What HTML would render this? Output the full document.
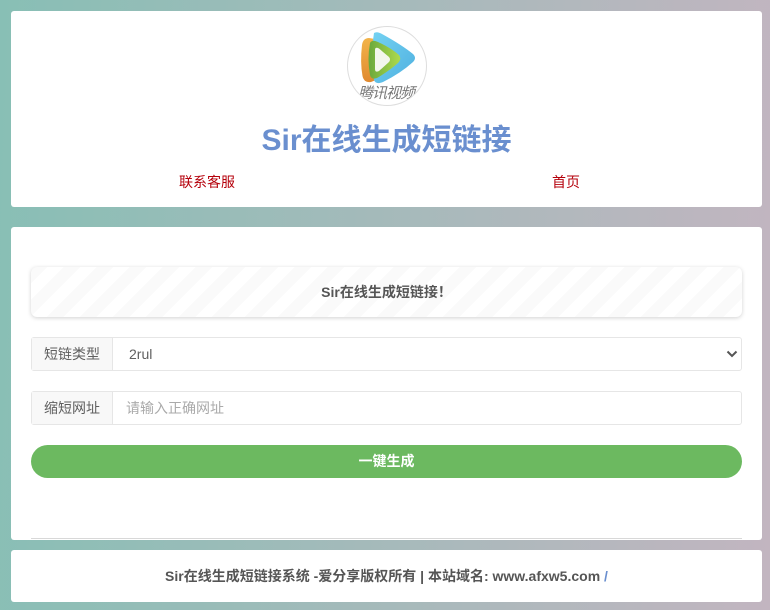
<!DOCTYPE html>
<html lang="zh-CN">
<head>
<meta charset="utf-8">
<title>Sir在线生成短链接</title>
<style>
*{box-sizing:border-box;margin:0;padding:0}
html,body{width:770px;height:610px;overflow:hidden}
body{position:relative;background:linear-gradient(92deg,#88bfb5 0%,#c2b5c0 100%);font-family:"Liberation Sans","Noto Sans CJK SC",sans-serif;font-size:14px;color:#555}
.card{position:absolute;left:11px;width:751px;background:#fff;border-radius:3px}
.a{position:absolute}
.logo{left:336px;top:15px;width:80px;height:80px}
.title{left:0;top:110px;width:751px;text-align:center;font-size:30px;font-weight:bold;line-height:40px;color:#6a8fcf}
.nav{top:161px;font-size:14px;line-height:20px;color:#b5000b}
.notice{left:20px;top:40px;width:711px;height:50px;border-radius:6px;text-align:center;font-size:14px;font-weight:bold;line-height:50px;color:#555;box-shadow:0 1px 4px rgba(0,0,0,.18);background-color:#fff;background-image:linear-gradient(135deg,#fafafa 25%,transparent 25%,transparent 50%,#fafafa 50%,#fafafa 75%,transparent 75%,transparent);background-size:33px 33px}
.group{left:20px;width:711px;height:34px;border:1px solid #e6e6e6;border-radius:3px;background:#fff;font-size:14px}
.addon{position:absolute;left:0;top:0;width:81px;height:32px;background:#f8f8f8;border-right:1px solid #e6e6e6;text-align:center;line-height:32px;color:#5f5f5f}
.val{position:absolute;left:97px;top:0;line-height:32px;color:#5f5f5f}
.ph{position:absolute;left:94px;top:0;line-height:32px;color:#aaa}
.chev{position:absolute;right:3px;top:11px;width:12px;height:10px}
.btn{left:20px;top:218px;width:711px;height:33px;border-radius:17px;background:#6cb960;color:#fff;text-align:center;font-size:14px;font-weight:bold;line-height:33px}
.hr{left:20px;top:311px;width:711px;height:1px;background:#d8d8d8}
.foot{text-align:center;font-size:14px;font-weight:bold;line-height:52px;color:#555}
.foot span{color:#6a8fcf}
</style>
</head>
<body>
<div class="card" style="top:11px;height:196px">
  <svg class="a logo" viewBox="0 0 80 80">
    <defs>
      <linearGradient id="g1" x1="0" y1="0" x2="1" y2="1"><stop offset="0" stop-color="#74d2f2"/><stop offset="1" stop-color="#4fb0e0"/></linearGradient>
      <linearGradient id="g2" x1="0" y1="0" x2="1" y2="0"><stop offset="0" stop-color="#6aa83c"/><stop offset="1" stop-color="#aeda4c"/></linearGradient>
      <linearGradient id="g3" x1="0" y1="0" x2="0" y2="1"><stop offset="0" stop-color="#f2b44a"/><stop offset="1" stop-color="#e08a30"/></linearGradient>
      <clipPath id="c"><circle cx="40" cy="40" r="39"/></clipPath>
    </defs>
    <circle cx="40" cy="40" r="39.500" fill="#fff" stroke="#ddd"/>
    <path d="M22 12 Q16 12 15 19 Q13 36 15.500 50 Q17 57 24 56 L34 52 L34 14 Z" fill="url(#g3)"/>
    <path d="M27 7 Q30 5 35 8 Q55 19 66 28 Q70 32 66 36 Q54 47 36 56 Q29 59 27 54 Q23 32 27 7Z" fill="url(#g1)"/>
    <path d="M23 17 Q25 13 31 16 Q44 22 52 29 Q55 33 51 37 Q42 45 30 52 Q24 54 23 49 Q20 33 23 17Z" fill="url(#g2)"/>
    <path d="M28 24 Q28 20.500 32 22.500 L42 31 Q44 33.500 42 36 L32 45 Q28 47 28 43Z" fill="#f3f6ec"/>
    <g clip-path="url(#c)"><text x="11" y="72" textLength="57" font-family="'Noto Sans CJK SC',sans-serif" font-size="15" font-style="italic" fill="#777">腾讯视频</text></g>
  </svg>
  <div class="a title">Sir在线生成短链接</div>
  <div class="a nav" style="left:168px">联系客服</div>
  <div class="a nav" style="left:541px">首页</div>
</div>

<div class="card" style="top:227px;height:313px">
  <div class="a notice">Sir在线生成短链接！</div>
  <div class="a group" style="top:110px">
    <div class="addon">短链类型</div>
    <div class="val">2rul</div>
    <svg class="chev" viewBox="0 0 12 10"><path d="M1.500 2.500 6 7 10.500 2.500" fill="none" stroke="#555" stroke-width="2"/></svg>
  </div>
  <div class="a group" style="top:164px">
    <div class="addon">缩短网址</div>
    <div class="ph">请输入正确网址</div>
  </div>
  <div class="a btn">一键生成</div>
  <div class="a hr"></div>
</div>

<div class="card foot" style="top:550px;height:52px">Sir在线生成短链接系统 -爱分享版权所有 | 本站域名: www.afxw5.com <span>/</span></div>
</body>
</html>
